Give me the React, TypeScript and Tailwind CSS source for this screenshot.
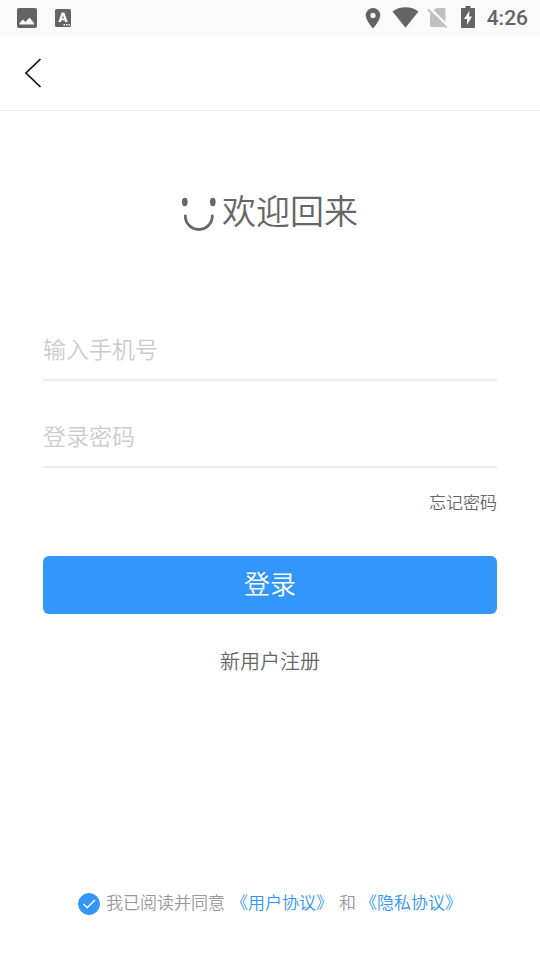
import { useState } from "react";

function StatusBar() {
  return (
    <div className="flex h-9 items-center justify-between bg-[#fafafa] pl-[17px] pr-3 text-[#646464]">
      <div className="flex items-center gap-[18px]">
        <svg width="20" height="20" viewBox="0 0 20 20" aria-hidden="true">
          <rect width="20" height="20" rx="2" fill="currentColor" />
          <path d="M2.500 16.500v-1.500l3.500-3.500 2.500 2.500 4-4.500 4.500 5.500v1.500z" fill="#fafafa" />
        </svg>
        <svg width="16" height="18" viewBox="0 0 16 18" aria-hidden="true">
          <rect width="16" height="18" rx="1.500" fill="currentColor" />
          <path
            fillRule="evenodd"
            d="M6.600 3.500h2.800l3.300 9.500h-2.700l-.5-1.700h-3L6 13H3.400zM8 6.300l-.9 3.200h1.800z"
            fill="#fafafa"
          />
          <path d="M8.500 15H10v1.500H8.500zM11 15h1.500v1.500H11zM13.500 15H15v1.500h-1.500z" fill="#fafafa" />
        </svg>
      </div>
      <div className="flex items-center">
        <svg className="mr-[11px]" width="16" height="22" viewBox="0 0 16 22" aria-hidden="true">
          <path
            fillRule="evenodd"
            d="M8 1a7.300 7.300 0 0 0-7.300 7.300C.7 13.600 8 21.500 8 21.500s7.300-7.900 7.300-13.200A7.300 7.300 0 0 0 8 1zm0 4.800a2.600 2.600 0 1 1 0 5.200 2.600 2.600 0 0 1 0-5.200z"
            fill="currentColor"
          />
        </svg>
        <svg className="mr-2" width="27" height="22" viewBox="0 0 27 22" aria-hidden="true">
          <path d="M13.500 20.700L.5 4.500C4 1.800 8.500.3 13.500.3S23 1.800 26.500 4.500z" fill="currentColor" />
        </svg>
        <svg className="mr-[13px]" width="21" height="22" viewBox="0 0 21 22" aria-hidden="true">
          <path d="M9 1h8a1.500 1.500 0 0 1 1.500 1.500v16A1.500 1.500 0 0 1 17 20H4.500A1.500 1.500 0 0 1 3 18.500V7z" fill="#c0c0c0" />
          <path d="M2 .5L21 19" stroke="#fafafa" strokeWidth="2.500" />
          <path d="M1 2.500L19.500 20.500" stroke="#c0c0c0" strokeWidth="1.800" />
        </svg>
        <svg className="mr-3" width="14" height="24" viewBox="0 0 14 24" aria-hidden="true">
          <path d="M4.500 0h5v2H13a1 1 0 0 1 1 1v18a1 1 0 0 1-1 1H1a1 1 0 0 1-1-1V3a1 1 0 0 1 1-1h3.500z" fill="currentColor" />
          <path d="M8.500 4.500L3 13h3v6l5-8.500H8z" fill="#fafafa" />
        </svg>
        <span className="font-[Roboto,sans-serif] text-[21px] font-medium leading-9">4:26</span>
      </div>
    </div>
  );
}

function Field({ label, type }: { label: string; type: string }) {
  return (
    <input
      type={type}
      aria-label={label}
      placeholder={label}
      className="block h-[87px] w-full border-b-2 border-[#ececec] bg-transparent pt-[22px] text-[23px] text-[#666] outline-none placeholder:text-[#ccc]"
    />
  );
}

export default function App() {
  const [agreed, setAgreed] = useState(true);

  return (
    <div className="flex min-h-screen flex-col bg-white font-['Noto_Sans_CJK_SC',sans-serif] font-[350] text-[#666]">
      <StatusBar />
      <header className="flex h-[75px] items-center border-b border-[#ebebeb] px-6">
        <button type="button" aria-label="返回" className="text-[#111]">
          <svg width="18" height="30" viewBox="0 0 18 30" fill="none" aria-hidden="true">
            <path d="M16.500 1L2 15l14.500 14" stroke="currentColor" strokeWidth="1.700" />
          </svg>
        </button>
      </header>

      <main className="flex flex-1 flex-col px-[43px] pt-[73px]">
        <h1 className="flex items-center justify-center gap-1.5 text-[34px] leading-[52px]">
          <svg width="34" height="36" viewBox="0 0 34 36" className="mt-2" aria-hidden="true">
            <ellipse cx="2.800" cy="6" rx="2.800" ry="4.200" fill="currentColor" />
            <ellipse cx="30.800" cy="6" rx="2.800" ry="4.200" fill="currentColor" />
            <path
              d="M3.300 20a13.500 13.500 0 0 0 27 0"
              fill="none"
              stroke="currentColor"
              strokeWidth="2.800"
              strokeLinecap="round"
            />
          </svg>
          欢迎回来
        </h1>

        <form className="mt-[58px]" onSubmit={(e) => e.preventDefault()}>
          <Field label="输入手机号" type="tel" />
          <Field label="登录密码" type="password" />
          <div className="mt-5 flex justify-end">
            <a href="#forgot" className="text-[17px] leading-7">
              忘记密码
            </a>
          </div>
          <button
            type="submit"
            className="mt-10 block h-[58px] w-full rounded-md bg-[#3296fa] pb-1.5 text-[26px] text-white"
          >
            登录
          </button>
        </form>
        <a href="#register" className="mt-[31px] self-center text-[20px] leading-8">
          新用户注册
        </a>
      </main>

      <footer className="flex items-center justify-center pb-11 text-[17px] leading-7 text-[#999]">
        <span className="relative mr-1.5 mt-1 h-[22px] w-[22px]">
          <input
            id="agree"
            type="checkbox"
            checked={agreed}
            onChange={(e) => setAgreed(e.target.checked)}
            className="block h-full w-full appearance-none rounded-full border border-[#999] checked:border-[#3296fa] checked:bg-[#3296fa]"
          />
          {agreed && (
            <svg className="pointer-events-none absolute inset-0" width="22" height="22" viewBox="0 0 22 22" fill="none" aria-hidden="true">
              <path d="M5.500 11l3.700 3.700L17 7" stroke="white" strokeWidth="1.400" />
            </svg>
          )}
        </span>
        <label htmlFor="agree">我已阅读并同意</label>
        <a href="#terms" className="ml-1.5 text-[#3296fa]">
          《用户协议》
        </a>
        <span className="ml-1.5 mr-1">和</span>
        <a href="#privacy" className="text-[#3296fa]">
          《隐私协议》
        </a>
      </footer>
    </div>
  );
}
